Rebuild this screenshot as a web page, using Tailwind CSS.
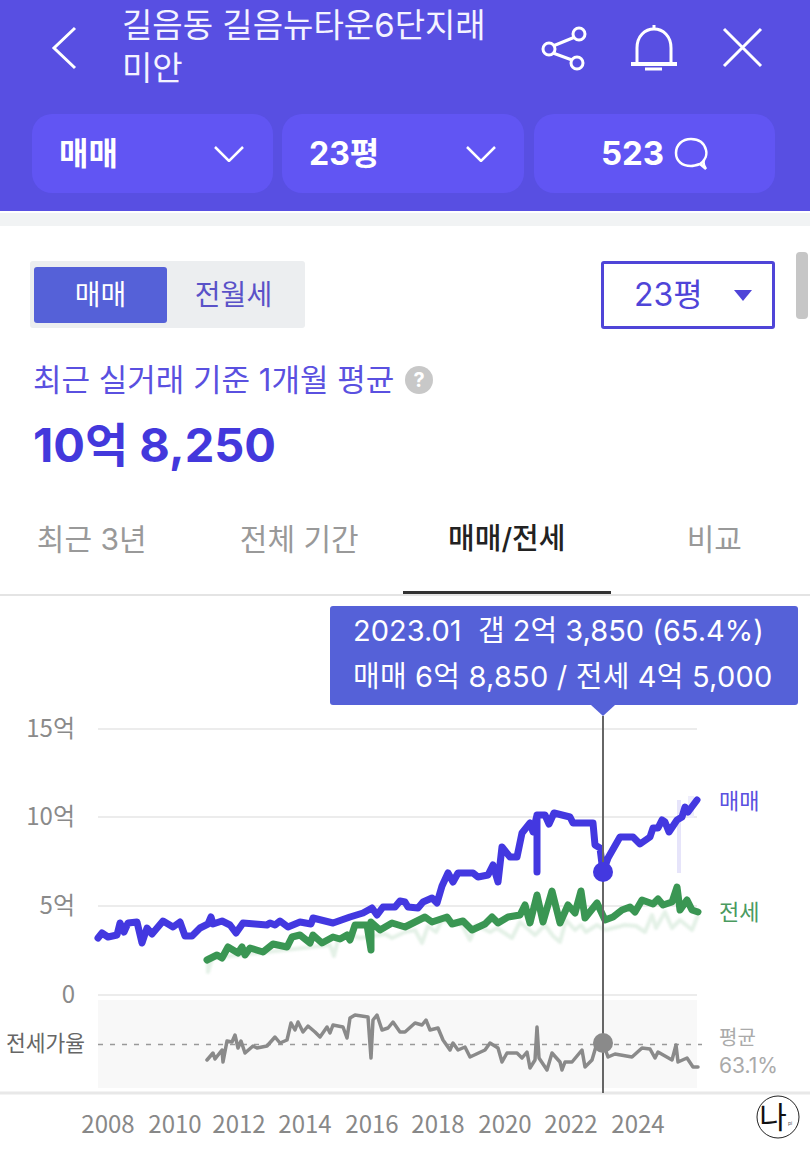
<!DOCTYPE html>
<html lang="ko">
<head>
<meta charset="UTF-8">
<meta name="viewport" content="width=device-width, initial-scale=1.0">
<title>길음뉴타운6단지래미안</title>
<script src="https://cdn.jsdelivr.net/npm/@tailwindcss/browser@4"></script>
</head>
<body class="bg-white font-['Inter','Noto_Sans_CJK_KR',sans-serif]">
<div class="relative w-[810px] h-[1152px] overflow-hidden">

  <!-- 상단 헤더 -->
  <header class="bg-[#584fe2] h-[211px] text-white">
    <div class="flex h-[114px]">
      <svg class="shrink-0 ml-[50px] w-[72px] h-[96px]" viewBox="50 0 72 96" fill="none" stroke="white" stroke-width="3"><path d="M75 28 L54 48 L75 68"/></svg>
      <h1 class="shrink-0 w-[400px] pt-[4px] text-[33px] leading-[43px] text-[#f4f3ff] whitespace-nowrap">길음동 길음뉴타운6단지래<br>미안</h1>
      <svg class="shrink-0 ml-[18px] w-[50px] h-[96px]" viewBox="540 0 50 96" fill="none" stroke="white" stroke-width="3"><path d="M575 37 L553 46 M553 53 L572 60"/><circle cx="579" cy="34" r="6"/><circle cx="549" cy="49" r="6"/><circle cx="577" cy="63" r="6"/></svg>
      <svg class="shrink-0 ml-[36px] w-[56px] h-[96px]" viewBox="626 0 56 96" fill="none" stroke="white" stroke-width="3"><path d="M637 62 V48 C637 36 645 29 654 29 C663 29 671 36 671 48 V62"/><path d="M631 64 H677" stroke-width="4"/><path d="M645 69 H662 M654 25 V29"/></svg>
      <svg class="shrink-0 ml-[38px] w-[46px] h-[96px]" viewBox="720 0 46 96" fill="none" stroke="white" stroke-width="3"><path d="M724 29 L761 66 M761 29 L724 66"/></svg>
    </div>
    <div class="flex gap-[9px] pl-[32px]">
      <div class="w-[241px] h-[79px] rounded-[20px] bg-[#6155f3] flex items-center justify-between pl-[27px] pr-[29px]">
        <span class="text-[32px] font-bold">매매</span>
        <svg class="w-[30px] h-[16px]" viewBox="0 0 30 16" fill="none" stroke="white" stroke-width="2.5"><path d="M1 1 L15 15 L29 1"/></svg>
      </div>
      <div class="w-[242px] h-[79px] rounded-[20px] bg-[#6155f3] flex items-center justify-between pl-[27px] pr-[28px]">
        <span class="text-[32px] font-bold">23평</span>
        <svg class="w-[30px] h-[16px]" viewBox="0 0 30 16" fill="none" stroke="white" stroke-width="2.5"><path d="M1 1 L15 15 L29 1"/></svg>
      </div>
      <div class="ml-[1px] w-[241px] h-[79px] rounded-[20px] bg-[#6155f3] flex items-center justify-center gap-[10px]">
        <span class="text-[33px] font-bold">523</span>
        <svg class="w-[34px] h-[33px]" viewBox="0 0 34 33" fill="none" stroke="white" stroke-width="2.5"><path d="M26 27 C32 23 33 17 32 13 C30 5 24 2 17 2 C8 2 2 8 2 16 C2 24 8 29 17 29 C20 29 23 28 26 27 L32 32 C29 28 29 26 30 23"/></svg>
      </div>
    </div>
  </header>
  <div class="h-[2px] bg-white"></div>
  <div class="h-[13px] bg-[#f1f3f4]"></div>

  <!-- 매매/전월세 선택 -->
  <section class="pt-[35px]">
    <div class="flex justify-between pl-[30px] pr-[35px]">
      <div class="w-[275px] h-[67px] bg-[#eceef0] rounded-[3px] flex items-center pl-[4px]">
        <div class="w-[133px] h-[56px] rounded-[3px] bg-[#5561d8] text-white text-[28px] flex items-center justify-center">매매</div>
        <div class="w-[133px] text-[28px] text-[#5a52c8] text-center">전월세</div>
      </div>
      <div class="w-[174px] h-[68px] border-[3px] border-[#4f45d8] rounded-[3px] flex items-center justify-between pl-[30px] pr-[20px]">
        <span class="text-[32px] text-[#4f45d8]">23평</span>
        <svg class="w-[18px] h-[11px]" viewBox="0 0 18 11" fill="#4f45d8"><path d="M0 0 H18 L9 11 Z"/></svg>
      </div>
    </div>

    <div class="mt-[31px] pl-[33px] h-[40px] flex items-center gap-[11px]">
      <span class="text-[31px] leading-[40px] text-[#5a50e0]">최근 실거래 기준 1개월 평균</span>
      <span class="w-[28px] h-[28px] rounded-full bg-[#c8c8c8] text-white text-[20px] font-bold flex items-center justify-center">?</span>
    </div>
    <p class="mt-[15px] pl-[33px] text-[47px] leading-[60px] font-bold text-[#4338dc]">10억 8,250</p>

    <nav class="mt-[21px] h-[100px] border-b-2 border-[#e4e4e4]">
      <div class="flex w-[830px] -ml-[12px] text-[30px]">
        <div class="w-[207.5px] h-[98px] flex items-center justify-center pb-[12px] text-[#999]">최근 3년</div>
        <div class="w-[207.5px] h-[98px] flex items-center justify-center pb-[12px] text-[#999]">전체 기간</div>
        <div class="w-[207.5px] h-[98px] flex items-center justify-center pb-[9px] text-[29px] text-[#222] font-medium border-b-[3px] border-[#333]">매매/전세</div>
        <div class="w-[207.5px] h-[98px] flex items-center justify-center pb-[12px] text-[#999]">비교</div>
      </div>
    </nav>
  </section>

  <!-- 차트 -->
  <section class="relative h-[556px]">
    <svg class="block w-[810px] h-[556px]" viewBox="0 596 810 556" fill="none">
      <rect x="98" y="1000" width="599" height="88" fill="#f8f8f8"/>
      <path d="M98 729 H697 M98 817 H697 M98 906 H697 M98 995 H697" stroke="#ececec" stroke-width="2"/>
      <path d="M0 1093 H810" stroke="#e8e8e8" stroke-width="3"/>
      <path d="M98 1044.5 H702" stroke="#999" stroke-width="1.5" stroke-dasharray="5 7"/>

      <!-- 실거래 옅은 범위 -->
      <path d="M679 800 V873" stroke="#e6e4fa" stroke-width="4"/>
      <path d="M691 796 V818" stroke="#eeedfb" stroke-width="6"/>
      <polyline class="blur-[1px]" stroke="#e4f1e7" stroke-width="4" stroke-linejoin="round" points="208,962 208,972 212,958 330,945 334,956 338,940 350,935 360,938 385,934 392,938 405,932 415,930 422,943 428,926 436,932 442,920 462,925 470,940 476,925 490,932 497,928 512,938 520,922 535,935 545,925 553,936 560,942 566,920 575,930 581,925 586,932 597,925 605,930 625,925 636,926 645,932 652,915 656,928 665,912 672,928 680,920 692,930 698,915"/>

      <g class="blur-[0.6px]" stroke-linejoin="round" stroke-linecap="round">
        <!-- 매매 -->
        <polyline stroke="#4338e0" stroke-width="7" points="98,938 102,933 108,937 117,935 120,923 124,932 128,923 137,922 142,943 147,928 152,934 163,921 173,927 180,922 185,936 192,936 200,928 208,924 211,917 213,924 222,921 230,925 236,933 243,923 267,925 270,923 275,925 280,921 288,927 300,922 311,924 313,918 333,923 350,917 363,913 372,908 377,915 383,907 395,907 400,901 405,902 408,907 418,908 423,902 432,898 437,903 442,886 448,873 453,882 458,873 473,873 478,877 488,875 493,865 498,882 502,847 510,857 517,857 522,833 530,823 533,832 537,815 537,872 537,815 545,815 549,824 554,813 570,817 573,823 593,823 595,845 600,848 603,872 608,858 620,837 633,837 640,844 650,837 653,828 658,828 662,820 665,822 669,832 677,820 682,817 685,807 688,812 697,800"/>

        <!-- 전세 -->
        <polyline stroke="#3a9653" stroke-width="7" points="207,960 217,955 222,958 228,947 238,953 242,947 245,955 250,948 263,952 273,944 287,947 292,937 300,935 310,943 313,935 322,943 333,937 340,939 347,935 350,940 355,925 367,925 371,950 371,922 380,930 392,923 405,927 415,922 425,917 432,922 447,917 452,924 463,921 472,930 485,924 492,917 498,923 508,917 520,915 525,905 530,923 537,895 543,922 552,891 560,923 568,905 575,913 581,891 585,918 597,903 605,920 613,917 622,910 630,907 635,912 642,900 653,904 658,899 663,905 672,902 677,887 680,910 687,900 692,910 698,912"/>

        <!-- 전세가율 -->
        <polyline stroke="#8a8a8a" stroke-width="3.5" points="207,1060 213,1053 215,1059 222,1050 223,1062 227,1041 232,1042 235,1035 238,1048 241,1041 245,1053 253,1046 257,1048 267,1046 275,1037 280,1043 287,1040 291,1023 295,1030 298,1022 303,1032 308,1026 315,1032 320,1037 327,1027 330,1033 333,1025 343,1027 347,1038 350,1018 355,1015 368,1017 371,1058 373,1020 377,1015 382,1030 388,1028 393,1022 400,1032 405,1032 415,1023 422,1025 426,1020 430,1030 438,1028 443,1040 450,1050 453,1043 458,1050 465,1047 470,1057 485,1050 490,1043 498,1048 502,1062 507,1053 517,1053 522,1058 527,1052 530,1068 535,1060 537,1027 539,1058 547,1070 552,1053 560,1062 562,1070 565,1062 572,1062 582,1050 585,1067 592,1060 597,1043 603,1043 608,1057 615,1054 632,1057 642,1048 650,1049 655,1058 658,1052 672,1060 676,1045 678,1062 687,1058 693,1067 698,1067"/>
      </g>

      <!-- 기준선과 마커 -->
      <path d="M603 716 V1093" stroke="#666" stroke-width="2"/>
      <circle cx="603" cy="872" r="10" fill="#4338e0"/>
      <circle cx="603" cy="1043" r="10" fill="#8a8a8a"/>

      <g class="font-['Noto_Sans_CJK_KR',sans-serif]" font-size="24" fill="#8a8a8a" text-anchor="end">
        <text x="75" y="737">15억</text>
        <text x="75" y="825">10억</text>
        <text x="75" y="914">5억</text>
        <text x="75" y="1003">0</text>
      </g>
      <g class="font-['Noto_Sans_CJK_KR',sans-serif]">
        <text x="6" y="1051" font-size="21.5" fill="#666">전세가율</text>
        <text x="719" y="809" font-size="22" fill="#5a50e0">매매</text>
        <text x="719" y="920" font-size="22" fill="#4a9a5f">전세</text>
      </g>
      <text x="719" y="1045" font-size="20" fill="#aaa">평균</text>
      <text x="719" y="1073" font-size="21" fill="#aaa">63.1%</text>
      <g class="font-['Noto_Sans_CJK_KR',sans-serif]" font-size="24" fill="#888" text-anchor="middle">
        <text x="108" y="1133">2008</text>
        <text x="175" y="1133">2010</text>
        <text x="239" y="1133">2012</text>
        <text x="305" y="1133">2014</text>
        <text x="372" y="1133">2016</text>
        <text x="438" y="1133">2018</text>
        <text x="505" y="1133">2020</text>
        <text x="571" y="1133">2022</text>
        <text x="638" y="1133">2024</text>
      </g>

      <!-- 우측 하단 도장 -->
      <circle cx="778" cy="1117" r="21" fill="white" stroke="#222" stroke-width="1"/>
      <text x="773" y="1128" font-size="30" fill="#111" text-anchor="middle">나</text>
      <text x="788" y="1125" font-size="5" fill="#555">pi</text>
    </svg>

    <!-- 툴팁 -->
    <div class="absolute left-[330px] top-[10px] w-[468px] h-[99px] rounded-[3px] bg-[#5561d8] text-white text-[29px] leading-[46px] pl-[23px] pt-[2px] whitespace-nowrap">
      <p class="whitespace-pre">2023.01  갭 2억 3,850 (65.4%)</p>
      <p class="tracking-[0.2px]">매매 6억 8,850 / 전세 4억 5,000</p>
    </div>
    <div class="absolute left-[591px] top-[109px] w-0 h-0 border-x-[12px] border-x-transparent border-t-[11px] border-t-[#5561d8]"></div>
  </section>

  <!-- 스크롤바 -->
  <div class="absolute left-[796px] top-[252px] w-[12px] h-[67px] rounded-[4px] bg-[#c6c6c6]"></div>
</div>
</body>
</html>
